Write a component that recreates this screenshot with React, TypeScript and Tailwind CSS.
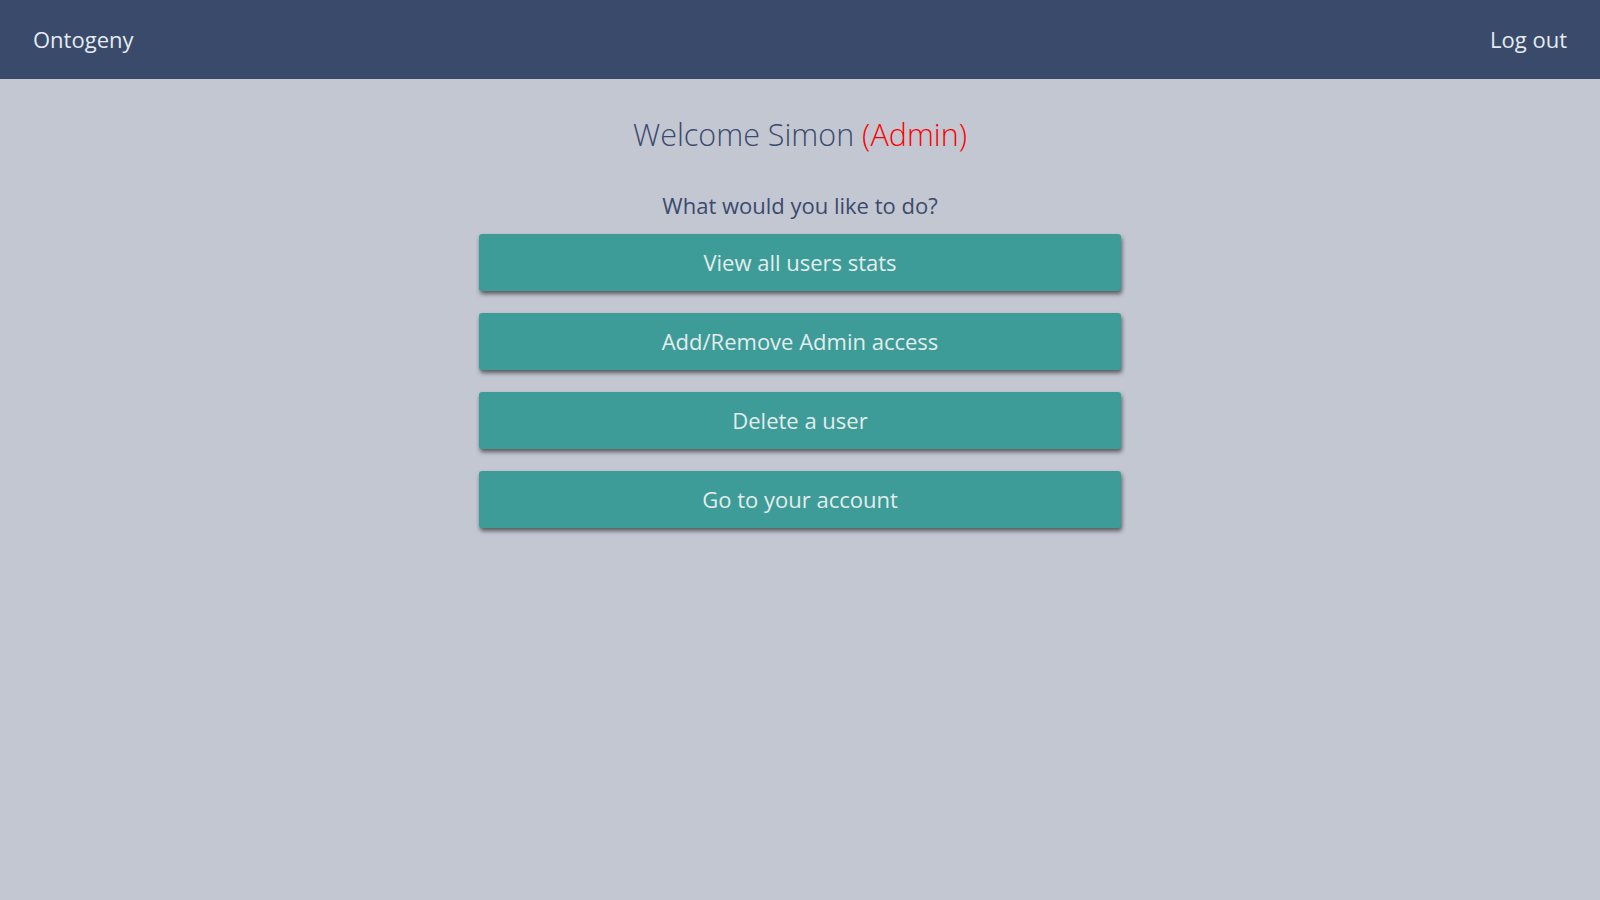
const actions = [
  'View all users stats',
  'Add/Remove Admin access',
  'Delete a user',
  'Go to your account',
]

export default function App() {
  return (
    <div className="min-h-screen bg-[#c3c7d2] font-['Open_Sans',sans-serif]">
      <header className="flex h-[79px] items-center justify-between bg-[#394a6b] px-[33px] text-[22px] text-[#e6eaf0]">
        <a href="#">Ontogeny</a>
        <a href="#">Log out</a>
      </header>

      <main className="flex flex-col items-center">
        <h1 className="mt-[35px] text-[30.5px] font-light leading-[40px] text-[#3b4a6d]">
          Welcome Simon <span className="text-[#ff0000]">(Admin)</span>
        </h1>
        <p className="mt-[36px] text-[22px] leading-[30px] text-[#3b4a6d]">
          What would you like to do?
        </p>
        <div className="mt-[14px] flex w-[642px] flex-col gap-[22px]">
          {actions.map((label) => (
            <button
              key={label}
              type="button"
              className="h-[57px] rounded-[3px] bg-[#3d9c98] text-[22px] text-[#e4ecec] shadow-[1px_3px_4px_rgba(0,0,0,0.55)]"
            >
              {label}
            </button>
          ))}
        </div>
      </main>
    </div>
  )
}
